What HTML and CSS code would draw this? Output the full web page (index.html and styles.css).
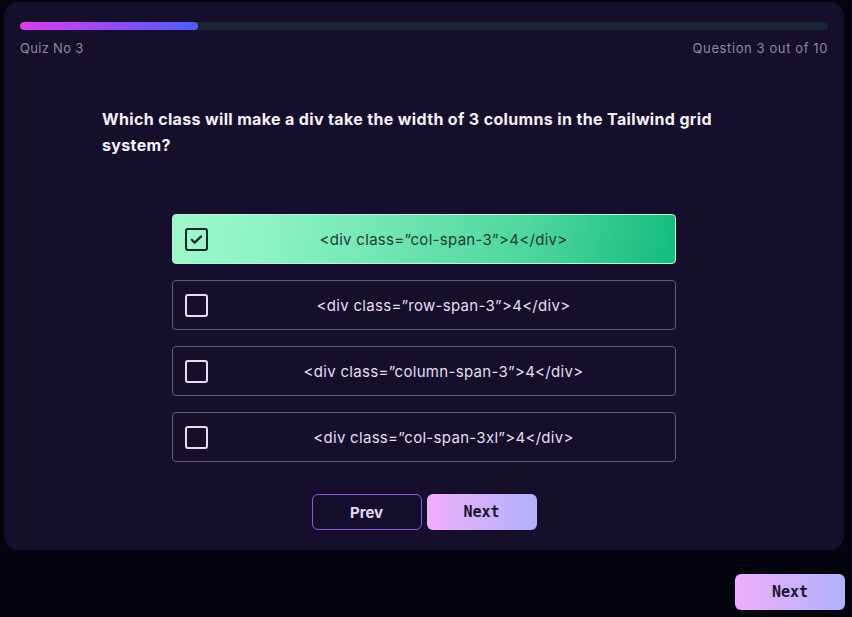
FILE: index.html
```html
<!DOCTYPE html>
<html lang="en">
<head>
<meta charset="utf-8">
<title>Quiz</title>
<link rel="stylesheet" href="styles.css">
</head>
<body>
<div class="card">
  <div class="progress"><div class="progress-fill" style="width:22%"></div></div>
  <div class="meta">
    <span class="quiz-no">Quiz No 3</span>
    <span class="q-count">Question 3 out of 10</span>
  </div>
  <h1 class="question">Which class will make a div take the width of 3 columns in the Tailwind grid system?</h1>
  <div class="options">
    <div class="option selected">
      <span class="box"><svg viewBox="0 0 24 24" width="15" height="15"><path d="M4.5 12.5l4.5 4.5L19.5 7" fill="none" stroke="#13242a" stroke-width="3.4" stroke-linecap="round" stroke-linejoin="round"/></svg></span>
      <span class="label">&lt;div class=”col-span-3”&gt;4&lt;/div&gt;</span>
    </div>
    <div class="option">
      <span class="box"></span>
      <span class="label">&lt;div class=”row-span-3”&gt;4&lt;/div&gt;</span>
    </div>
    <div class="option">
      <span class="box"></span>
      <span class="label">&lt;div class=”column-span-3”&gt;4&lt;/div&gt;</span>
    </div>
    <div class="option">
      <span class="box"></span>
      <span class="label">&lt;div class=”col-span-3xl”&gt;4&lt;/div&gt;</span>
    </div>
  </div>
  <div class="nav">
    <button class="btn prev">Prev</button>
    <button class="btn next">Next</button>
  </div>
</div>
<div class="footer">
  <button class="btn next">Next</button>
</div>
</body>
</html>
```
FILE: styles.css
```css
html, body {
  margin: 0;
  padding: 0;
  background: #04040f;
  font-family: Inter, "Open Sans", sans-serif;
}
.card {
  margin: 2px 8px 0 4px;
  background: #150f2b;
  border-radius: 14px;
  padding: 20px 16px 20px 16px;
  display: flex;
  flex-direction: column;
  align-items: center;
}
.progress {
  width: 100%;
  height: 8px;
  border-radius: 4px;
  background: #1b2434;
  overflow: hidden;
}
.progress-fill {
  height: 100%;
  border-radius: 4px;
  background: linear-gradient(90deg, #dc3cf0, #4d5cf8);
}
.meta {
  width: 100%;
  display: flex;
  justify-content: space-between;
  margin-top: 10px;
  font-size: 13px;
  line-height: 16px;
  color: #8e8b9c;
}
.quiz-no {
  letter-spacing: 0.3px;
}
.q-count {
  letter-spacing: 0.6px;
}
.question {
  align-self: flex-start;
  margin: 50px 0 0 82px;
  width: 650px;
  font-size: 16px;
  line-height: 26px;
  font-weight: 700;
  letter-spacing: 0.35px;
  color: #f4f1fb;
}
.options {
  width: 504px;
  margin-top: 56px;
  display: flex;
  flex-direction: column;
  gap: 16px;
}
.option {
  height: 50px;
  box-sizing: border-box;
  border: 1px solid #5f5975;
  border-radius: 4px;
  display: flex;
  align-items: center;
  padding-left: 12px;
  color: #e6def3;
  font-size: 15px;
  letter-spacing: 0.3px;
}
.option.selected {
  border-color: #b7f5d6;
  background: linear-gradient(100deg, #9ef9cc 0%, #8cf2c4 20%, #4fd79d 70%, #12bd7e 100%);
  color: #1d3b35;
}
.box {
  width: 23px;
  height: 23px;
  box-sizing: border-box;
  border: 2.5px solid #e7dbf8;
  border-radius: 3px;
  display: flex;
  align-items: center;
  justify-content: center;
  flex: none;
}
.selected .box {
  border-color: #13242a;
}
.label {
  flex: 1;
  text-align: center;
  padding-left: 4px;
}
.nav {
  margin-top: 32px;
  display: flex;
  gap: 5px;
}
.btn {
  width: 110px;
  height: 36px;
  box-sizing: border-box;
  border-radius: 6px;
  font-size: 14px;
  font-weight: 700;
  cursor: pointer;
}
.prev {
  background: transparent;
  border: 1px solid #8a56e8;
  color: #e3daf2;
  font-family: Inter, "Open Sans", sans-serif;
  font-size: 15px;
}
.next {
  border: none;
  background: linear-gradient(90deg, #f0aefc, #b0b2fc);
  color: #1a1530;
  font-family: "DejaVu Sans Mono", monospace;
  font-size: 15px;
}
.footer {
  display: flex;
  justify-content: flex-end;
  padding: 24px 7px 0 0;
}
```
